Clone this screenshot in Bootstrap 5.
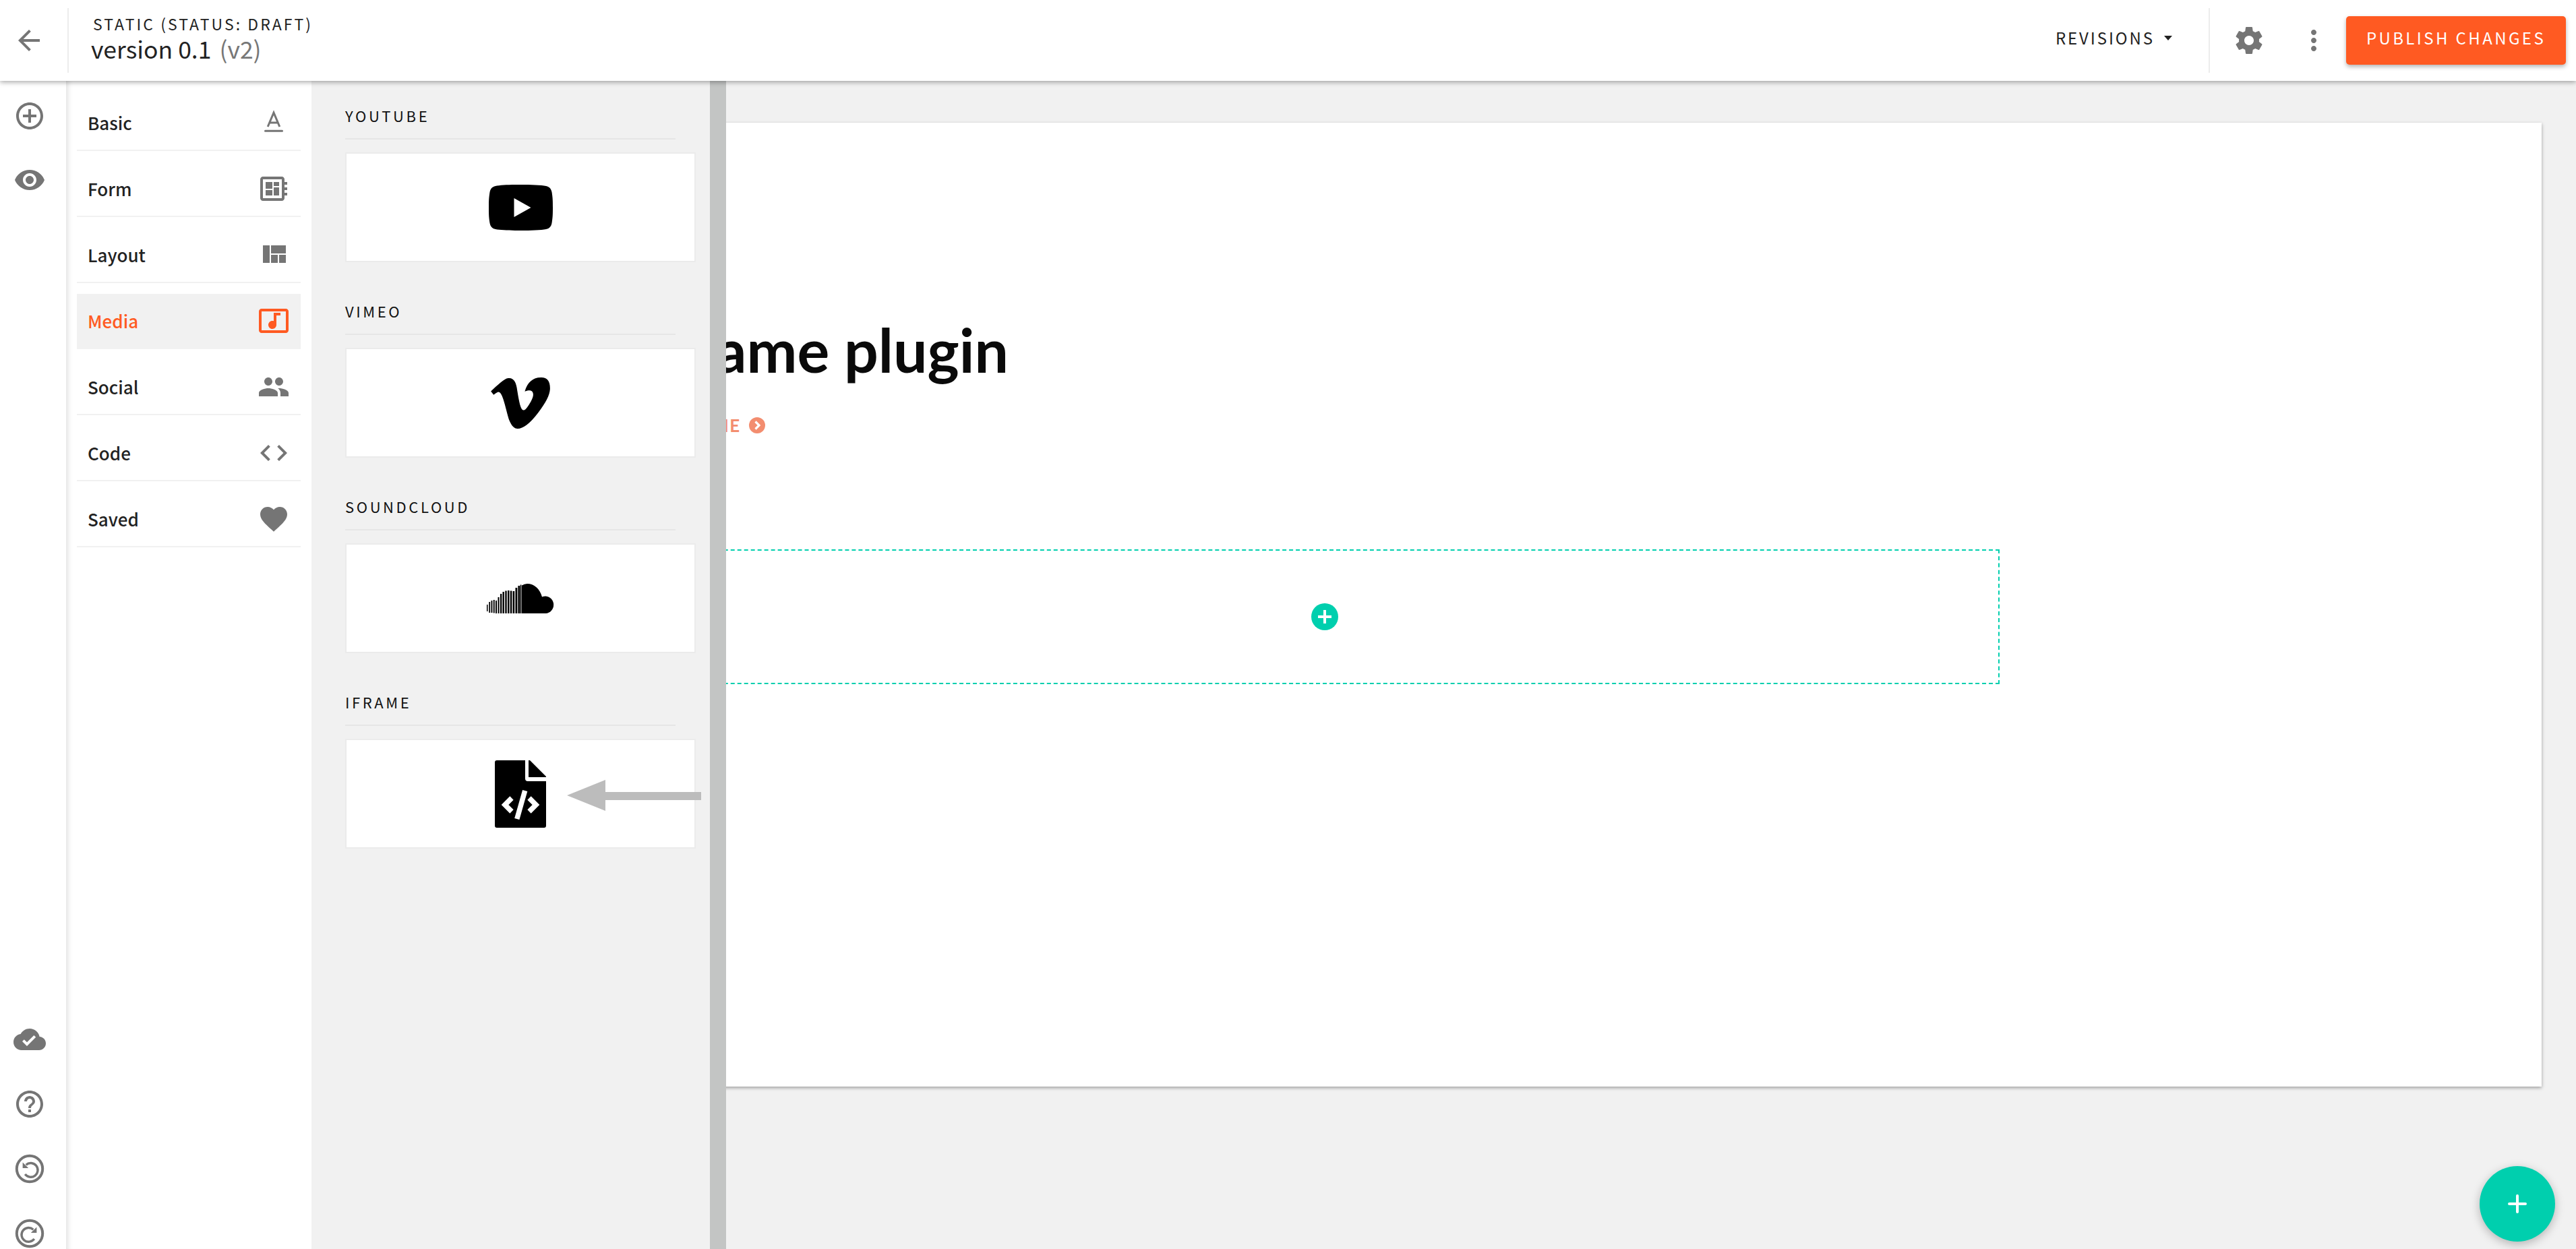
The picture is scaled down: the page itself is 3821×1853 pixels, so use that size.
<!DOCTYPE html>
<html lang="en">
<head>
    <meta charset="UTF-8">
    <title>Static page editor</title>
    <link rel="stylesheet" href="https://cdn.jsdelivr.net/npm/bootstrap@5.3.0/dist/css/bootstrap.min.css">
    <style>
        html, body { height: 100%; overflow: hidden; }
        body { background: #f1f1f1; color: #222; font-family: "Noto Sans CJK SC", "Noto Sans", sans-serif; }
        svg { display: block; flex: none; }
        .ico { width: 48px; height: 48px; fill: #757575; }

        .topbar { height: 120px; background: #fff; box-shadow: 0 2px 7px rgba(0,0,0,.35); position: relative; z-index: 5; padding: 0 15px 0 19px; }
        .topdiv { width: 2px; height: 96px; background: #ececec; }
        .back-div { margin: 0 33px 0 33px; }
        .page-kind { font-size: 23px; line-height: 30px; letter-spacing: 3.05px; margin: -6px 0 0 3px; }
        .page-name { font-size: 35.5px; line-height: 44px; }
        .page-name span { color: #777; margin-left: 4px; }
        .rev-btn { font-size: 24px; letter-spacing: 2.9px; line-height: 30px; margin-right: 54px; padding-bottom: 8px; }
        .rev-caret { width: 0; height: 0; border: 6px solid transparent; border-top: 7px solid #222; border-bottom: 0; margin-left: 14px; }
        .gear-box { margin: 0 48px 0 34px; }
        .pub-btn { height: 72px; width: 326px; background: #ff5a22; color: #fff; border: 0; border-radius: 5px; font-size: 24px; letter-spacing: 3.4px; padding-bottom: 10px; box-shadow: 0 3px 6px rgba(0,0,0,.3); margin-left: 24px; }

        .stage { height: 1733px; padding: 62px 51px 0 160px; }
        .page-sheet { height: 1430px; background: #fff; box-shadow: 0 2px 5px rgba(0,0,0,.35); padding-top: 282px; }
        .sheet-inner { width: 2002px; margin: 0 auto; }
        .sheet-title { font-family: Lato, sans-serif; font-weight: 700; font-size: 89.5px; line-height: 110px; color: #0a0a0a; margin: 0 0 0 8px; }
        .sheet-link { font-family: Lato, sans-serif; font-weight: 700; font-size: 26px; line-height: 40px; letter-spacing: 1.5px; color: #f38d6f; margin: 37px 0 0 29px; gap: 12px; }
        .sheet-link svg { width: 24px; height: 24px; }
        .drop-zone { height: 200px; border: 2px dashed #00cfae; margin-top: 164px; }
        .drop-add { width: 40px; height: 40px; border-radius: 50%; background: #00cfae; }

        .side-wrap { position: absolute; top: 120px; left: 0; bottom: 0; z-index: 3; }
        .rail { width: 98px; background: #fff; padding: 28px 0 0 20px; }
        .rail-top { gap: 47px; }
        .rail-bot { gap: 48px; margin-bottom: -1px; }
        .cat-panel { width: 364px; background: #fff; padding: 22px 16px 0; box-shadow: inset 9px 0 8px -7px rgba(0,0,0,.14); gap: 16px; }
        .cat-item { height: 82px; border-bottom: 2px solid #f1f1f1; padding: 0 0 1px 16px; font-size: 26px; font-weight: 500; }
        .cat-item.is-on { background: #f1f1f1; color: #ff5a22; }
        .cat-item.is-on .ico { fill: #ff5a22; }
        .cat-item .ico { margin: 1px 16px 0 0; }
        .item-panel { width: 615px; background: #f1f1f1; border-right: 24px solid #c3c5c4; padding: 36px 0 0 50px; position: relative; }
        .item-group { margin-bottom: 57px; }
        .group-label { width: 490px; font-size: 22px; line-height: 30px; letter-spacing: 3.6px; color: #111; padding-bottom: 19px; border-bottom: 2px solid #e6e6e6; margin-bottom: 19px; }
        .group-tile { width: 520px; height: 163px; background: #fff; border: 2px solid #ebebeb; }
        .tip-arrow { position: absolute; left: 379px; top: 1037px; width: 199px; height: 46px; }
        .fab { position: fixed; right: 31px; bottom: 11px; width: 112px; height: 112px; border-radius: 50%; background: #00cfae; border: 0; box-shadow: 0 4px 14px rgba(0,0,0,.25); z-index: 6; }
    </style>
</head>
<body>
    <header class="topbar d-flex align-items-center">
        <svg class="ico" viewBox="0 0 24 24"><path d="M20 11H7.83l5.59-5.59L12 4l-8 8 8 8 1.41-1.41L7.83 13H20v-2z"/></svg>
        <div class="topdiv back-div"></div>
        <div>
            <div class="page-kind">STATIC (STATUS: DRAFT)</div>
            <div class="page-name">version 0.1 <span>(v2)</span></div>
        </div>
        <div class="ms-auto d-flex align-items-center">
            <div class="rev-btn d-flex align-items-center">REVISIONS<span class="rev-caret"></span></div>
            <div class="topdiv"></div>
            <svg class="ico gear-box" viewBox="0 0 24 24"><path d="M19.43 12.98c.04-.32.07-.64.07-.98s-.03-.66-.07-.98l2.11-1.65c.19-.15.24-.42.12-.64l-2-3.46c-.12-.22-.39-.3-.61-.22l-2.49 1c-.52-.4-1.08-.73-1.69-.98l-.38-2.65C14.46 2.18 14.25 2 14 2h-4c-.25 0-.46.18-.49.42l-.38 2.65c-.61.25-1.17.59-1.69.98l-2.49-1c-.23-.09-.49 0-.61.22l-2 3.46c-.13.22-.07.49.12.64l2.11 1.65c-.04.32-.07.65-.07.98s.03.66.07.98l-2.11 1.65c-.19.15-.24.42-.12.64l2 3.46c.12.22.39.3.61.22l2.49-1c.52.4 1.08.73 1.69.98l.38 2.65c.03.24.24.42.49.42h4c.25 0 .46-.18.49-.42l.38-2.65c.61-.25 1.17-.59 1.69-.98l2.49 1c.23.09.49 0 .61-.22l2-3.46c.12-.22.07-.49-.12-.64l-2.11-1.65zM12 15.5c-1.93 0-3.5-1.57-3.5-3.5s1.57-3.5 3.5-3.5 3.5 1.57 3.5 3.5-1.57 3.5-3.5 3.5z"/></svg>
            <svg class="ico" viewBox="0 0 24 24"><path d="M12 8c1.1 0 2-.9 2-2s-.9-2-2-2-2 .9-2 2 .9 2 2 2zm0 2c-1.1 0-2 .9-2 2s.9 2 2 2 2-.9 2-2-.9-2-2-2zm0 6c-1.1 0-2 .9-2 2s.9 2 2 2 2-.9 2-2-.9-2-2-2z"/></svg>
            <button class="pub-btn">PUBLISH CHANGES</button>
        </div>
    </header>

    <main class="stage">
        <div class="page-sheet">
            <div class="sheet-inner">
                <h1 class="sheet-title">Iframe plugin</h1>
                <div class="sheet-link d-flex align-items-center">IFRAME
                    <svg viewBox="0 0 24 24"><circle cx="12" cy="12" r="12" fill="#f38d6f"/><path d="M9.5 6.5 15 12l-5.5 5.5" fill="none" stroke="#fff" stroke-width="3.2"/></svg>
                </div>
                <div class="drop-zone d-flex align-items-center justify-content-center">
                    <div class="drop-add d-flex align-items-center justify-content-center">
                        <svg width="20" height="20" viewBox="0 0 20 20"><path d="M8 0h4v8h8v4h-8v8H8v-8H0V8h8z" fill="#fff"/></svg>
                    </div>
                </div>
            </div>
        </div>
    </main>

    <div class="side-wrap d-flex">
        <nav class="rail d-flex flex-column justify-content-between">
            <div class="rail-top d-flex flex-column">
                <svg class="ico" viewBox="0 0 24 24"><path d="M13 7h-2v4H7v2h4v4h2v-4h4v-2h-4V7zm-1-5C6.48 2 2 6.48 2 12s4.48 10 10 10 10-4.48 10-10S17.52 2 12 2zm0 18c-4.41 0-8-3.59-8-8s3.59-8 8-8 8 3.59 8 8-3.59 8-8 8z"/></svg>
                <svg class="ico" viewBox="0 0 24 24"><path d="M12 4.5C7 4.5 2.73 7.61 1 12c1.73 4.39 6 7.5 11 7.5s9.27-3.11 11-7.5c-1.73-4.39-6-7.5-11-7.5zM12 17c-2.76 0-5-2.24-5-5s2.24-5 5-5 5 2.24 5 5-2.24 5-5 5zm0-8c-1.66 0-3 1.34-3 3s1.34 3 3 3 3-1.34 3-3-1.34-3-3-3z"/></svg>
            </div>
            <div class="rail-bot d-flex flex-column">
                <svg class="ico" viewBox="0 0 24 24"><path d="M19.35 10.04C18.67 6.59 15.64 4 12 4 9.11 4 6.6 5.64 5.35 8.04 2.34 8.36 0 10.91 0 14c0 3.31 2.69 6 6 6h13c2.76 0 5-2.24 5-5 0-2.64-2.05-4.78-4.65-4.96zM10 17l-3.5-3.5 1.41-1.41L10 14.17 15.18 9l1.41 1.41L10 17z"/></svg>
                <svg class="ico" viewBox="0 0 24 24"><path d="M11 18h2v-2h-2v2zm1-16C6.48 2 2 6.48 2 12s4.48 10 10 10 10-4.48 10-10S17.52 2 12 2zm0 18c-4.41 0-8-3.59-8-8s3.59-8 8-8 8 3.59 8 8-3.59 8-8 8zm0-14c-2.21 0-4 1.79-4 4h2c0-1.1.9-2 2-2s2 .9 2 2c0 2-3 1.75-3 5h2c0-2.25 3-2.5 3-5 0-2.21-1.79-4-4-4z"/></svg>
                <svg class="ico" viewBox="0 0 24 24"><circle cx="12" cy="12" r="9.6" fill="none" stroke="#757575" stroke-width="2"/><path d="M9.3 9.1A5.200 5.200 0 1 1 8.600 16" fill="none" stroke="#757575" stroke-width="1.7"/><path d="M6.800 7.200v4.300h4.300z"/></svg>
                <svg class="ico" viewBox="0 0 24 24"><circle cx="12" cy="12" r="9.6" fill="none" stroke="#757575" stroke-width="2"/><path d="M14.700 9.100A5.200 5.200 0 1 0 15.400 16" fill="none" stroke="#757575" stroke-width="1.7"/><path d="M17.200 7.200v4.300h-4.300z"/></svg>
            </div>
        </nav>

        <aside class="cat-panel d-flex flex-column">
            <div class="cat-item d-flex align-items-center justify-content-between">Basic
                <svg class="ico" viewBox="0 0 24 24"><path d="M7.600 15 12 4.600 16.400 15M9 12h6" fill="none" stroke="#757575" stroke-width="1.5"/><rect x="5" y="17.400" width="14" height="1.500" rx=".75"/></svg>
            </div>
            <div class="cat-item d-flex align-items-center justify-content-between">Form
                <svg class="ico" viewBox="0 0 24 24"><path d="M22 9V7h-2V5c0-1.100-.9-2-2-2H4c-1.100 0-2 .9-2 2v14c0 1.100.9 2 2 2h14c1.100 0 2-.9 2-2v-2h2v-2h-2v-2h2v-2h-2V9h2zm-4 10H4V5h14v14zM6 13h5v4H6zm6-6h4v3h-4zM6 7h5v5H6zm6 4h4v6h-4z"/></svg>
            </div>
            <div class="cat-item d-flex align-items-center justify-content-between">Layout
                <svg class="ico" viewBox="0 0 24 24"><path d="M10 18h5v-6h-5v6zm-6 0h5V5H4v13zm12 0h5v-6h-5v6zM10 5v6h11V5H10z"/></svg>
            </div>
            <div class="cat-item is-on d-flex align-items-center justify-content-between">Media
                <svg class="ico" viewBox="0 0 24 24"><path d="M21 3H3c-1.11 0-2 .89-2 2v14c0 1.100.89 2 2 2h18c1.100 0 2-.9 2-2V5c0-1.110-.9-2-2-2zm0 16H3V5h18v14zM8 15c0-1.660 1.340-3 3-3 .35 0 .69.07 1 .18V6h5v2h-3v7.030c-.02 1.640-1.350 2.970-3 2.970-1.660 0-3-1.340-3-3z"/></svg>
            </div>
            <div class="cat-item d-flex align-items-center justify-content-between">Social
                <svg class="ico" viewBox="0 0 24 24"><path d="M16 11c1.660 0 2.990-1.340 2.990-3S17.660 5 16 5c-1.660 0-3 1.340-3 3s1.340 3 3 3zm-8 0c1.660 0 2.990-1.340 2.990-3S9.660 5 8 5C6.340 5 5 6.340 5 8s1.340 3 3 3zm0 2c-2.330 0-7 1.170-7 3.500V19h14v-2.500c0-2.330-4.670-3.500-7-3.500zm8 0c-.29 0-.62.02-.97.05 1.160.84 1.970 1.970 1.970 3.450V19h6v-2.500c0-2.330-4.670-3.500-7-3.500z"/></svg>
            </div>
            <div class="cat-item d-flex align-items-center justify-content-between">Code
                <svg class="ico" viewBox="0 0 24 24"><path d="M9.400 16.600L4.800 12l4.600-4.600L8 6l-6 6 6 6 1.400-1.400zm5.200 0l4.600-4.600-4.600-4.600L16 6l6 6-6 6-1.400-1.400z"/></svg>
            </div>
            <div class="cat-item d-flex align-items-center justify-content-between">Saved
                <svg class="ico" viewBox="0 0 24 24"><path d="M12 21.350l-1.450-1.320C5.400 15.360 2 12.280 2 8.500 2 5.420 4.420 3 7.500 3c1.740 0 3.410.81 4.500 2.090C13.090 3.810 14.760 3 16.500 3 19.580 3 22 5.420 22 8.500c0 3.780-3.400 6.860-8.550 11.540L12 21.350z"/></svg>
            </div>
        </aside>

        <section class="item-panel">
            <div class="item-group">
                <div class="group-label">YOUTUBE</div>
                <div class="group-tile d-flex align-items-center justify-content-center">
                    <svg width="95" height="68" viewBox="0 0 95 68"><path d="M47.500 0C62 0 78 .5 85 2c5 1 7.500 4 8.500 9C95 20 95 26 95 34s0 14-1.500 23c-1 5-3.500 8-8.500 9-7 1.500-23 2-37.500 2S17 67.500 10 66c-5-1-7.500-4-8.500-9C0 48 0 42 0 34s0-14 1.500-23c1-5 3.500-8 8.500-9C17 .5 33 0 47.500 0z"/><path d="M37.500 20v28l25-14z" fill="#fff"/></svg>
                </div>
            </div>
            <div class="item-group">
                <div class="group-label">VIMEO</div>
                <div class="group-tile d-flex align-items-center justify-content-center">
                    <svg width="88" height="76" viewBox="0 64 448 388"><path d="M447.800 153.600c-2 43.600-32.400 103.300-91.400 179.100-60.900 79.200-112.400 118.800-154.600 118.800-26.100 0-48.200-24.100-66.300-72.300C100.300 250 85.300 174.300 56.200 174.300c-3.400 0-15.100 7.100-35.200 21.100L0 168.200c51.600-45.300 100.900-95.700 131.800-98.500 34.900-3.400 56.300 20.500 64.400 71.500 28.700 181.500 41.400 208.900 93.600 126.700 18.700-29.600 28.800-52.100 30.200-67.600 4.800-45.900-35.800-42.800-63.300-31 22-72.100 64.100-107.100 126.200-105.100 45.800 1.200 67.500 31.100 64.900 89.400z"/></svg>
                </div>
            </div>
            <div class="item-group">
                <div class="group-label">SOUNDCLOUD</div>
                <div class="group-tile d-flex align-items-center justify-content-center">
                    <svg width="100" height="44" viewBox="0 0 100 44">
                        <path d="M0 31h1.500v10H0zM3.300 27h1.800v16H3.300zM6.500 25h1.900v18H6.500zM9.800 24h1.900v19.500H9.800zM13 25h2v19h-2zM16.500 20h2.100v24h-2.100zM20 15h2.300v29H20zM23.500 12h2.400v32h-2.400zM27.300 10.500h2.400V44h-2.400zM31 10h2.500v34H31zM34.800 10.500h2.500V44h-2.500zM38.600 11h2.600v33h-2.600zM42.500 6h2.800v38h-2.800zM46.400 3h2.900v41h-2.900zM49.800 1.500h1.600V44h-1.600z"/>
                        <path d="M52 44V2.500Q56 0 60 0c10 0 19 7.500 22 19.500q2.500-1 5.500-1a12.800 12.800 0 0 1 0 25.500z"/>
                    </svg>
                </div>
            </div>
            <div class="item-group">
                <div class="group-label">IFRAME</div>
                <div class="group-tile d-flex align-items-center justify-content-center">
                    <svg width="76" height="100" viewBox="0 0 76 100">
                        <path d="M3 0h42v27a4 4 0 0 0 4 4h27v66a3 3 0 0 1-3 3H3a3 3 0 0 1-3-3V3a3 3 0 0 1 3-3z"/>
                        <path d="M50 0h2l24 24v1H50z"/>
                        <g fill="none" stroke="#fff" stroke-width="7.500"><path d="M25 56 15 66l10 10M51 56l10 10-10 10"/><path d="M44.700 45 32.800 87"/></g>
                    </svg>
                </div>
            </div>
            <svg class="tip-arrow" viewBox="0 0 199 46"><path d="M0 23 57 0v18h142v12H57v16z" fill="#bcbcbc"/></svg>
        </section>
    </div>

    <button class="fab d-flex align-items-center justify-content-center">
        <svg width="28" height="28" viewBox="0 0 28 28"><path d="M14 2v24M2 14h24" stroke="#fff" stroke-width="4" stroke-linecap="round"/></svg>
    </button>

    <script src="https://cdn.jsdelivr.net/npm/bootstrap@5.3.0/dist/js/bootstrap.bundle.min.js"></script>
</body>
</html>
